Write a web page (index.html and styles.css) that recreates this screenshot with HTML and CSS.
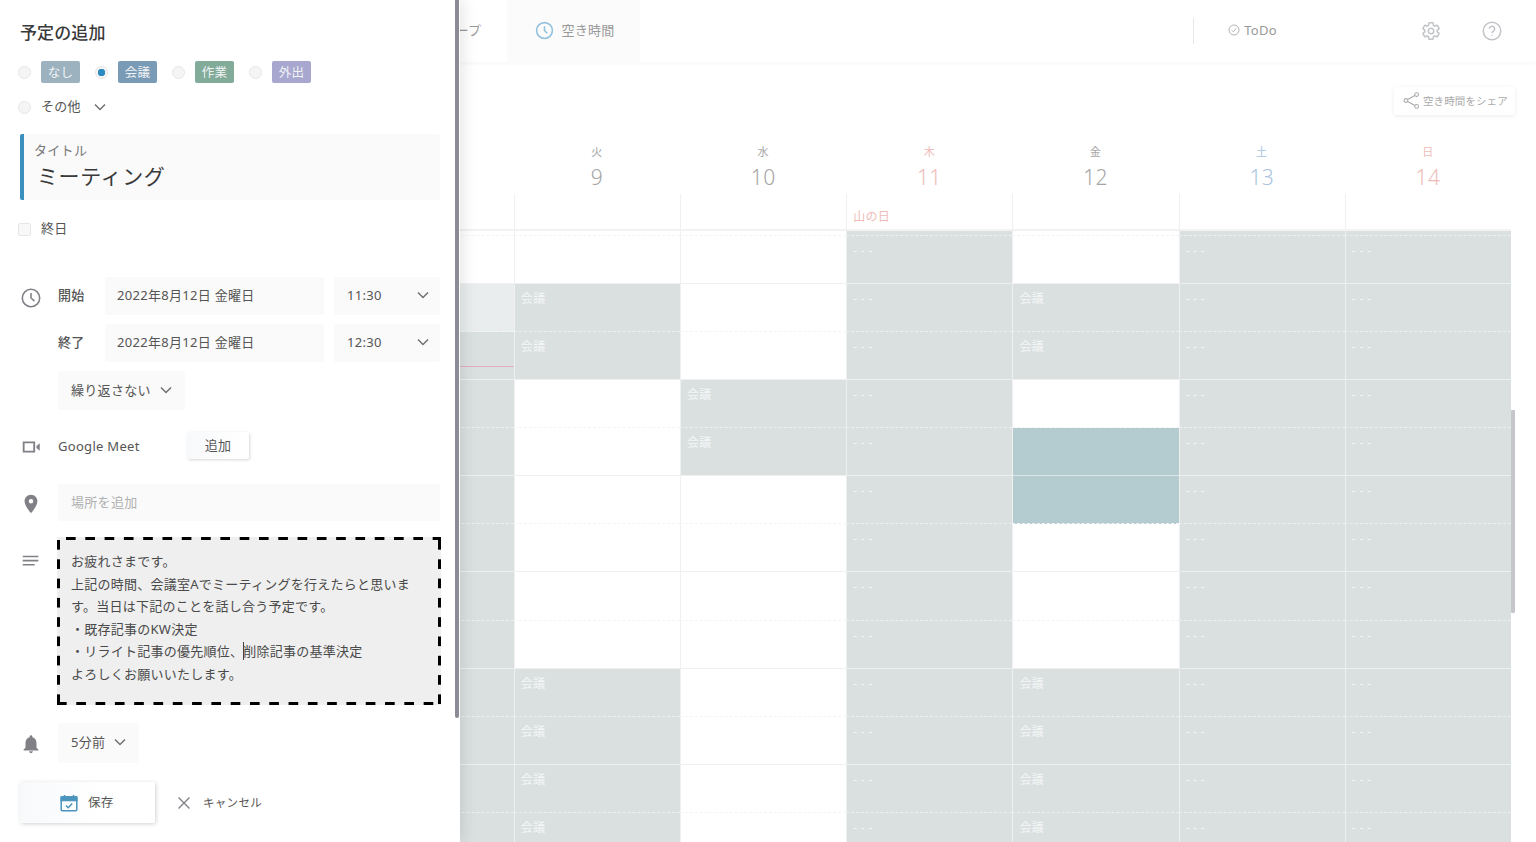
FILE: index.html
```html
<!DOCTYPE html>
<html lang="ja">
<head>
    <meta charset="UTF-8">
    <title>予定の追加</title>
    <link rel="stylesheet" href="styles.css">
</head>
<body>
<div class="page">
    <header class="topbar">
        <div class="tab">グループ</div>
        <div class="tab tab-active">
            <svg class="tab-icon" viewBox="0 0 24 24"><circle cx="12" cy="12" r="10"/><path d="M12 6.5V12l3.5 3.5"/></svg>
            空き時間
        </div>
        <div class="topbar-right">
            <span class="divider"></span>
            <span class="todo">
                <svg class="todo-icon" viewBox="0 0 24 24"><circle cx="12" cy="12" r="10"/><path d="M7.5 12.5l3 3 6-6.5"/></svg>
                ToDo
            </span>
            <svg class="gear" viewBox="0 0 24 24"><path d="M19.43 12.98c.04-.32.07-.64.07-.98 0-.34-.03-.66-.07-.98l2.11-1.65c.19-.15.24-.42.12-.64l-2-3.46c-.09-.16-.26-.25-.44-.25-.06 0-.12.01-.17.03l-2.49 1c-.52-.4-1.08-.73-1.69-.98l-.38-2.65C14.46 2.18 14.25 2 14 2h-4c-.25 0-.46.18-.49.42l-.38 2.65c-.61.25-1.17.59-1.69.98l-2.49-1c-.06-.02-.12-.03-.18-.03-.17 0-.34.09-.43.25l-2 3.46c-.13.22-.07.49.12.64l2.11 1.65c-.04.32-.07.65-.07.98 0 .33.03.66.07.98l-2.11 1.65c-.19.15-.24.42-.12.64l2 3.46c.09.16.26.25.44.25.06 0 .12-.01.17-.03l2.49-1c.52.4 1.08.73 1.69.98l.38 2.65c.03.24.24.42.49.42h4c.25 0 .46-.18.49-.42l.38-2.65c.61-.25 1.17-.59 1.69-.98l2.49 1c.06.02.12.03.18.03.17 0 .34-.09.43-.25l2-3.46c.12-.22.07-.49-.12-.64l-2.11-1.65z"/><circle cx="12" cy="12" r="3.3"/></svg>
            <svg class="help" viewBox="0 0 24 24"><circle cx="12" cy="12" r="10.5"/><path d="M8.8 9.4a3.2 3.2 0 1 1 5 2.7c-1 .7-1.8 1.3-1.8 2.7"/><path d="M12 17v1"/></svg>
        </div>
    </header>

    <div class="toolbar">
        <div class="share">
            <svg class="share-icon" viewBox="0 0 20 20"><circle cx="3.5" cy="10" r="2.2"/><circle cx="16" cy="3" r="2.2"/><circle cx="16" cy="17" r="2.2"/><path d="M5.4 8.9L14 4.1M5.4 11.1L14 15.9"/></svg>
            空き時間をシェア
        </div>
    </div>

    <div class="calendar">
        <div class="days">
            <div class="day"></div>
            <div class="day"><span class="wday">火</span><span class="num">9</span></div>
            <div class="day"><span class="wday">水</span><span class="num">10</span></div>
            <div class="day holiday"><span class="wday">木</span><span class="num">11</span></div>
            <div class="day"><span class="wday">金</span><span class="num">12</span></div>
            <div class="day sat"><span class="wday">土</span><span class="num">13</span></div>
            <div class="day holiday"><span class="wday">日</span><span class="num">14</span></div>
        </div>

        <div class="row allday">
            <div class="cell"></div><div class="cell"></div><div class="cell"></div><div class="cell holiday-name">山の日</div><div class="cell"></div><div class="cell"></div><div class="cell"></div>
        </div>
        <div class="row stub dash">
            <div class="cell"></div><div class="cell"></div><div class="cell"></div><div class="cell off"></div><div class="cell"></div><div class="cell off"></div><div class="cell off"></div>
        </div>

        <div class="row">
            <div class="cell"></div><div class="cell"></div><div class="cell"></div><div class="cell off">- - -</div><div class="cell"></div><div class="cell off">- - -</div><div class="cell off">- - -</div>
        </div>
        <div class="row dash">
            <div class="cell past"></div><div class="cell busy">会議</div><div class="cell"></div><div class="cell off">- - -</div><div class="cell busy">会議</div><div class="cell off">- - -</div><div class="cell off">- - -</div>
        </div>
        <div class="row">
            <div class="cell busy"><span class="now"></span></div><div class="cell busy">会議</div><div class="cell"></div><div class="cell off">- - -</div><div class="cell busy">会議</div><div class="cell off">- - -</div><div class="cell off">- - -</div>
        </div>
        <div class="row dash">
            <div class="cell busy"></div><div class="cell"></div><div class="cell busy">会議</div><div class="cell off">- - -</div><div class="cell"></div><div class="cell off">- - -</div><div class="cell off">- - -</div>
        </div>
        <div class="row">
            <div class="cell busy"></div><div class="cell"></div><div class="cell busy">会議</div><div class="cell off">- - -</div><div class="cell pick"></div><div class="cell off">- - -</div><div class="cell off">- - -</div>
        </div>
        <div class="row dash">
            <div class="cell busy"></div><div class="cell"></div><div class="cell"></div><div class="cell off">- - -</div><div class="cell pick"></div><div class="cell off">- - -</div><div class="cell off">- - -</div>
        </div>
        <div class="row">
            <div class="cell busy"></div><div class="cell"></div><div class="cell"></div><div class="cell off">- - -</div><div class="cell"></div><div class="cell off">- - -</div><div class="cell off">- - -</div>
        </div>
        <div class="row dash">
            <div class="cell busy"></div><div class="cell"></div><div class="cell"></div><div class="cell off">- - -</div><div class="cell"></div><div class="cell off">- - -</div><div class="cell off">- - -</div>
        </div>
        <div class="row">
            <div class="cell busy"></div><div class="cell"></div><div class="cell"></div><div class="cell off">- - -</div><div class="cell"></div><div class="cell off">- - -</div><div class="cell off">- - -</div>
        </div>
        <div class="row dash">
            <div class="cell busy"></div><div class="cell busy">会議</div><div class="cell"></div><div class="cell off">- - -</div><div class="cell busy">会議</div><div class="cell off">- - -</div><div class="cell off">- - -</div>
        </div>
        <div class="row">
            <div class="cell busy"></div><div class="cell busy">会議</div><div class="cell"></div><div class="cell off">- - -</div><div class="cell busy">会議</div><div class="cell off">- - -</div><div class="cell off">- - -</div>
        </div>
        <div class="row dash">
            <div class="cell busy"></div><div class="cell busy">会議</div><div class="cell"></div><div class="cell off">- - -</div><div class="cell busy">会議</div><div class="cell off">- - -</div><div class="cell off">- - -</div>
        </div>
        <div class="row">
            <div class="cell busy"></div><div class="cell busy">会議</div><div class="cell"></div><div class="cell off">- - -</div><div class="cell busy">会議</div><div class="cell off">- - -</div><div class="cell off">- - -</div>
        </div>

        <span class="cal-scroll"></span>
    </div>

    <aside class="panel">
        <h1 class="panel-title">予定の追加</h1>

        <div class="kinds">
            <label class="kind"><span class="radio"></span><span class="tag tag-none">なし</span></label>
            <label class="kind"><span class="radio radio-on"></span><span class="tag tag-meeting">会議</span></label>
            <label class="kind"><span class="radio"></span><span class="tag tag-work">作業</span></label>
            <label class="kind"><span class="radio"></span><span class="tag tag-out">外出</span></label>
        </div>
        <div class="other">
            <span class="radio"></span>
            <span class="lift">その他</span>
            <svg class="chev" viewBox="0 0 12 8"><path d="M1 1.5l5 5 5-5"/></svg>
        </div>

        <div class="title-box">
            <div class="title-label">タイトル</div>
            <div class="title-value">ミーティング</div>
        </div>

        <div class="allday-check">
            <span class="check"></span>
            <span class="lift">終日</span>
        </div>

        <div class="time-row first">
            <div class="ico">
                <svg viewBox="0 0 24 24" class="stroke"><circle cx="12" cy="12" r="9.5"/><path d="M12 6.5V12l3.8 3.4"/></svg>
            </div>
            <span class="time-label lift">開始</span>
            <div class="field date">2022年8月12日 金曜日</div>
            <div class="field time">11:30<svg class="chev" viewBox="0 0 12 8"><path d="M1 1.5l5 5 5-5"/></svg></div>
        </div>
        <div class="time-row">
            <div class="ico"></div>
            <span class="time-label lift">終了</span>
            <div class="field date">2022年8月12日 金曜日</div>
            <div class="field time">12:30<svg class="chev" viewBox="0 0 12 8"><path d="M1 1.5l5 5 5-5"/></svg></div>
        </div>
        <div class="field repeat">繰り返さない<svg class="chev" viewBox="0 0 12 8"><path d="M1 1.5l5 5 5-5"/></svg></div>

        <div class="meet">
            <div class="ico">
                <svg viewBox="0 0 24 24" class="fill"><path d="M3 6h13.5v12H3zM5 8v8h9.5V8zM18 10.8L21.5 8v8L18 13.2z" fill-rule="evenodd"/></svg>
            </div>
            <span class="meet-name">Google Meet</span>
            <button class="meet-add">追加</button>
        </div>

        <div class="place">
            <div class="ico">
                <svg viewBox="0 0 24 24" class="fill"><path d="M12 2C8.13 2 5 5.13 5 9c0 5.25 7 13 7 13s7-7.75 7-13c0-3.87-3.13-7-7-7zm0 9.5a2.5 2.5 0 0 1 0-5 2.5 2.5 0 0 1 0 5z"/></svg>
            </div>
            <div class="field place-field">場所を追加</div>
        </div>

        <div class="note-row">
            <div class="ico note-ico">
                <svg viewBox="0 0 24 24" class="stroke"><path d="M3 6h17M3 10.500h17M3 15h13"/></svg>
            </div>
            <div class="note">
                お疲れさまです。<br>
                上記の時間、会議室Aでミーティングを行えたらと思います。当日は下記のことを話し合う予定です。<br>
                ・既存記事のKW決定<br>
                ・リライト記事の優先順位、<span class="caret"></span>削除記事の基準決定<br>
                よろしくお願いいたします。
            </div>
        </div>

        <div class="remind">
            <div class="ico">
                <svg viewBox="0 0 24 24" class="fill"><path d="M12 22c1.1 0 2-.9 2-2h-4c0 1.100.9 2 2 2zm6-6v-5c0-3.070-1.630-5.640-4.500-6.320V4c0-.83-.67-1.500-1.500-1.500s-1.500.67-1.500 1.500v.68C7.640 5.360 6 7.920 6 11v5l-2 2v1h16v-1l-2-2z"/></svg>
            </div>
            <div class="field remind-field">5分前<svg class="chev" viewBox="0 0 12 8"><path d="M1 1.5l5 5 5-5"/></svg></div>
        </div>

        <div class="actions">
            <button class="save">
                <svg viewBox="0 0 18 18" class="save-icon"><rect x="1.200" y="3" width="15.600" height="13.800" rx="1"/><path class="band" d="M1.200 3h15.600v3.500H1.200zM4.500 1v3M13.500 1v3"/><path d="M6 11.500l2.200 2.200 4-4.200"/></svg>
                保存
            </button>
            <button class="cancel">
                <svg viewBox="0 0 14 14" class="cancel-icon"><path d="M1.500 1.500l11 11M12.500 1.500l-11 11"/></svg>
                キャンセル
            </button>
        </div>

        <span class="panel-scroll"></span>
    </aside>
</div>
</body>
</html>
```

FILE: styles.css
```css
html, body {
    margin: 0;
    padding: 0;
    height: 100%;
    overflow: hidden;
    background: #fff;
}

body {
    font-family: "Noto Sans", "Noto Sans CJK JP", sans-serif;
    font-size: 13px;
    line-height: 18px;
    letter-spacing: 0.300px;
    color: #555;
}

.page {
    position: relative;
    width: 1536px;
    height: 842px;
    overflow: hidden;
}

/* text sat a pixel low when centred in a flex row */
.lift {
    padding-bottom: 2px;
}

/* top bar */
.topbar {
    display: flex;
    align-items: stretch;
    height: 62px;
    padding-left: 403px;
    box-shadow: 0 2px 4px rgba(0, 0, 0, 0.03);
    color: #999;
}

.tab {
    display: flex;
    align-items: center;
    padding: 0 26px 2px;
}

.tab-active {
    gap: 7px;
    padding: 0 25px 2px 28px;
    background: #fbfbfb;
}

.tab-icon {
    width: 19px;
    height: 19px;
    fill: none;
    stroke: #93c2de;
    stroke-width: 2;
}

.topbar-right {
    display: flex;
    align-items: center;
    margin-left: auto;
    padding-right: 34px;
}

.divider {
    width: 1px;
    height: 26px;
    background: #e6e6e6;
}

.todo {
    display: flex;
    align-items: center;
    gap: 4px;
    margin-left: 34px;
    margin-right: 144px;
    padding-bottom: 2px;
}

.todo-icon {
    width: 12px;
    height: 12px;
    fill: none;
    stroke: #aaa;
    stroke-width: 1.800;
}

.gear, .help {
    width: 20px;
    height: 20px;
    fill: none;
    stroke: #c2c4c8;
    stroke-width: 1.800;
}

.gear {
    margin-right: 41px;
}

/* share button */
.toolbar {
    display: flex;
    justify-content: flex-end;
    padding: 25px 21px 0 0;
}

.share {
    display: flex;
    align-items: center;
    gap: 3px;
    width: 121px;
    height: 28px;
    box-sizing: border-box;
    padding: 0 0 1px 9px;
    font-size: 10.500px;
    letter-spacing: 0.100px;
    color: #aaa;
    white-space: nowrap;
    background: #fff;
    border-radius: 2px;
    box-shadow: 0 1px 4px rgba(0, 0, 0, 0.08);
}

.share-icon {
    width: 17px;
    height: 17px;
    flex: none;
    fill: none;
    stroke: #aaa;
    stroke-width: 1.200;
}

/* calendar */
.calendar {
    position: relative;
    margin-top: 26px;
    margin-left: 347.700px;
    width: 1163.300px;
}

.days, .row {
    display: grid;
    grid-template-columns: repeat(7, 1fr);
}

.days {
    height: 53px;
}

.day {
    display: flex;
    flex-direction: column;
    align-items: center;
    color: #a5a5a5;
}

.wday {
    height: 20px;
    line-height: 21px;
    font-size: 11px;
}

.num {
    height: 32px;
    line-height: 32px;
    font-size: 21px;
    font-weight: 300;
}

.holiday {
    color: #eebcb8;
}

.sat {
    color: #aac4de;
}

.row {
    height: 48.150px;
    box-sizing: border-box;
}

.allday {
    height: 37px;
}

.stub {
    height: 4.500px;
}

.cell {
    position: relative;
    box-sizing: border-box;
    padding: 6px 6px 0;
    line-height: 18px;
    font-size: 12px;
    color: #f4f6f6;
    border-left: 1px solid #f0f0f0;
    border-bottom: 1px solid #eff0f0;
}

.dash .cell {
    border-bottom-style: dashed;
    border-bottom-color: #f4f4f4;
}

.allday .cell {
    padding-top: 14px;
    border-bottom-width: 2px;
    border-bottom-color: #f2f2f2;
}

.holiday-name {
    font-size: 12px;
    color: #eebcb8;
}

.stub .cell {
    padding: 0;
}

.off, .busy {
    background: #dae0e0;
    border-left-color: #eef0f0;
}

.row .off, .row .busy {
    border-bottom-color: #eef0f0;
}

.past {
    background: #e9eded;
}

.pick {
    background: #b4cbcf;
    border-bottom-color: #dfe6e7;
}

.now {
    position: absolute;
    left: 0;
    right: 0;
    top: 34px;
    height: 1px;
    background: #e6aebd;
}

.cal-scroll {
    position: absolute;
    left: 100%;
    top: 269px;
    width: 4px;
    height: 203px;
    background: #c5c7ca;
    border-radius: 1px;
}

/* left panel */
.panel {
    position: absolute;
    left: 0;
    top: 0;
    box-sizing: border-box;
    width: 460px;
    height: 842px;
    padding: 21px 20px 0;
    background: #fff;
    box-shadow: 3px 0 14px rgba(0, 0, 0, 0.1);
}

.panel-scroll {
    position: absolute;
    left: 455px;
    top: 0;
    width: 4px;
    height: 718px;
    background: #8b8b95;
    border-radius: 0 0 2px 2px;
}

.panel-title {
    margin: 0;
    line-height: 24px;
    font-size: 17px;
    font-weight: 500;
    letter-spacing: 0.100px;
    color: #3a3a3a;
}

.kinds {
    display: flex;
    gap: 15px;
    margin: 16px 0 0 -2px;
}

.kind {
    display: flex;
    align-items: center;
    gap: 10px;
}

.radio {
    display: block;
    width: 11px;
    height: 11px;
    flex: none;
    background: #f5f5f5;
    border: 1px solid #e6e6e9;
    border-radius: 50%;
}

.radio-on {
    background: radial-gradient(circle, #2f8cc0 0 3.500px, #f5f5f5 4px);
}

.tag {
    display: block;
    width: 39px;
    height: 22px;
    line-height: 24px;
    text-align: center;
    font-size: 12.500px;
    color: #f0f3f5;
    border-radius: 2px;
}

.tag-none {
    background: #9cb2bf;
}

.tag-meeting {
    background: #7a9bb6;
}

.tag-work {
    background: #82ab9a;
}

.tag-out {
    background: #a8a7cf;
}

.other {
    display: flex;
    align-items: center;
    gap: 10px;
    height: 18px;
    margin: 15px 0 0 -2px;
}

.chev {
    display: block;
    flex: none;
    width: 12px;
    height: 8px;
    fill: none;
    stroke: #707070;
    stroke-width: 1.500;
}

.other .chev {
    margin-left: 3px;
}

.title-box {
    box-sizing: border-box;
    height: 66px;
    margin-top: 18px;
    padding: 7px 0 0 10px;
    background: #fafafa;
    border-left: 4px solid #3a8fbd;
    border-radius: 2px;
}

.title-label {
    line-height: 18px;
    color: #777;
}

.title-value {
    margin: 2px 0 0 3px;
    line-height: 30px;
    font-size: 21px;
    letter-spacing: 0.600px;
    color: #3a3a3a;
}

.allday-check {
    display: flex;
    align-items: center;
    gap: 10px;
    height: 18px;
    margin: 20px 0 0 -2px;
}

.check {
    display: block;
    width: 11px;
    height: 11px;
    background: #f8f8f8;
    border: 1px solid #e6e6e9;
    border-radius: 2px;
}

.ico {
    width: 38px;
    flex: none;
}

.ico svg {
    display: block;
    width: 22px;
    height: 22px;
}

.stroke {
    fill: none;
    stroke: #808086;
    stroke-width: 1.700;
}

.fill {
    fill: #808086;
}

.time-row {
    display: flex;
    align-items: center;
    gap: 0;
    height: 38px;
    margin-top: 9px;
}

.time-row.first {
    margin-top: 39px;
}

.time-row.first .ico {
    padding-top: 4px;
}

.time-label {
    width: 47px;
    flex: none;
    font-weight: 500;
    color: #555;
}

.field {
    display: flex;
    align-items: center;
    box-sizing: border-box;
    background: #fafafa;
    border-radius: 2px;
}

.date {
    width: 219px;
    height: 38px;
    padding: 0 0 2px 12px;
}

.time {
    justify-content: space-between;
    width: 106px;
    height: 38px;
    margin-left: 10px;
    padding: 0 11px 2px 13px;
}

.repeat {
    justify-content: space-between;
    width: 127px;
    height: 39px;
    margin: 9px 0 0 38px;
    padding: 0 13px 1px;
}

.meet {
    display: flex;
    align-items: center;
    height: 27px;
    margin-top: 22px;
}

.meet .ico {
    padding-top: 3px;
}

.meet-name {
    width: 129px;
    flex: none;
}

button {
    font-family: inherit;
    font-size: 13px;
    letter-spacing: inherit;
    line-height: inherit;
    color: #555;
    border: 0;
    padding: 0;
    cursor: pointer;
}

.meet-add {
    width: 62px;
    height: 27px;
    padding-bottom: 2px;
    background: linear-gradient(90deg, #f8f9fb, #fff);
    border-radius: 2px;
    box-shadow: 1px 1px 3px rgba(0, 0, 0, 0.16);
}

.place {
    display: flex;
    align-items: center;
    height: 37px;
    margin-top: 25px;
}

.place .ico {
    padding-top: 3px;
}

.place-field {
    flex: 1;
    height: 37px;
    padding: 0 0 2px 13px;
    color: #b0b0b0;
}

.note-row {
    display: flex;
    margin-top: 16px;
}

.note-ico {
    width: 37px;
    padding-top: 14px;
}

.note {
    box-sizing: border-box;
    width: 384px;
    height: 168px;
    margin-right: -1px;
    padding: 13px 28px 0 14px;
    line-height: 22.500px;
    letter-spacing: 0.250px;
    color: #4a4a4a;
    background-color: #efefef;
    background-image:
        linear-gradient(90deg, #000 10px, transparent 10px),
        linear-gradient(90deg, #000 10px, transparent 10px),
        linear-gradient(#000 10px, transparent 10px),
        linear-gradient(#000 10px, transparent 10px);
    background-size: 19.300px 3px, 19.300px 3px, 3px 19.300px, 3px 19.300px;
    background-position: 9px 0, 0 100%, 0 3px, 100% 3px;
    background-repeat: repeat-x, repeat-x, repeat-y, repeat-y;
}

.caret {
    display: inline-block;
    width: 1px;
    height: 18px;
    margin-right: -1px;
    vertical-align: -4px;
    background: #444;
}

.remind {
    display: flex;
    align-items: center;
    height: 40px;
    margin-top: 18px;
}

.remind .ico {
    padding-top: 2px;
}

.remind-field {
    justify-content: space-between;
    width: 81px;
    height: 40px;
    padding: 0 13px 2px;
}

.actions {
    display: flex;
    align-items: center;
    gap: 22px;
    height: 41px;
    margin-top: 19px;
}

.save {
    display: flex;
    align-items: center;
    gap: 10px;
    width: 135px;
    height: 41px;
    padding-left: 40px;
    font-size: 12.500px;
    background: linear-gradient(90deg, #f7f9fb, #fff 60%);
    border-radius: 2px;
    box-shadow: 1px 1px 4px rgba(0, 0, 0, 0.18);
}

.save-icon {
    width: 18px;
    height: 18px;
    fill: none;
    stroke: #4a94bd;
    stroke-width: 1.500;
}

.save-icon .band {
    fill: #4a94bd;
}

.cancel {
    display: flex;
    align-items: center;
    gap: 12px;
    background: none;
    font-size: 11.500px;
}

.cancel-icon {
    width: 14px;
    height: 14px;
    fill: none;
    stroke: #808086;
    stroke-width: 1.400;
}
```
